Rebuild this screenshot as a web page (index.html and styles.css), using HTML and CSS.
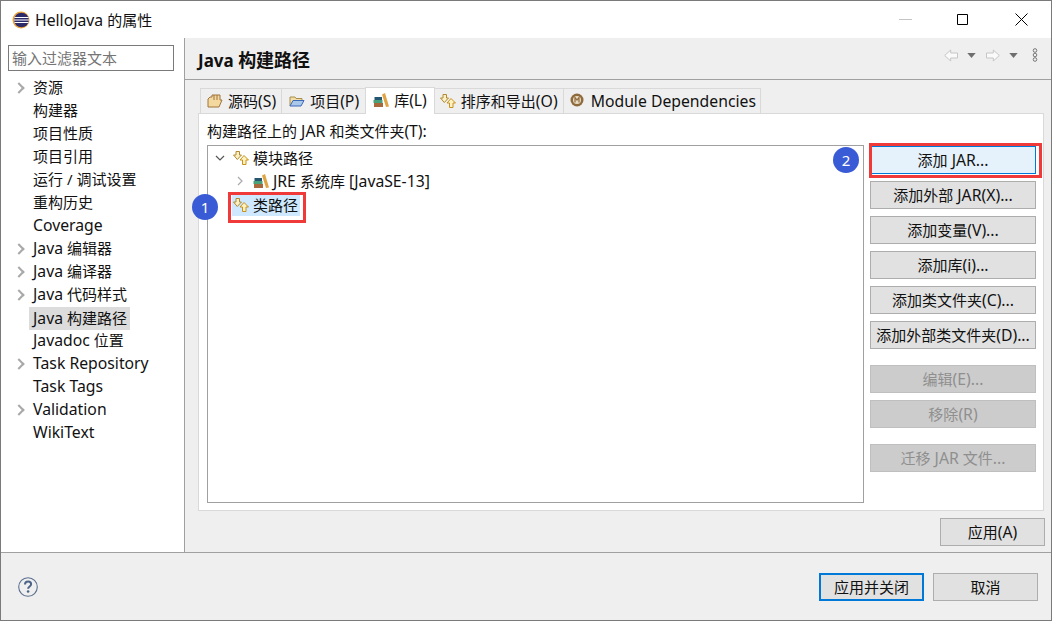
FILE: index.html
```html
<!DOCTYPE html>
<html>
	<head>
		<meta charset="utf-8">
		<title>HelloJava 的属性</title>
		<link rel="stylesheet" href="styles.css">
	</head>
	<body>
		<svg class="defs" width="0" height="0">
			<defs>
				<symbol id="ico-path" viewBox="0 0 16 16">
					<path d="M3 1.500h3.500v3.500h2l-4.200 4.500L0.500 5h2.500z" fill="#fbf0c4" stroke="#b08a30"/>
					<path d="M9.500 14.500h3.500v-4.500h2.500l-4.500-4.500-4 4.500h2.500z" fill="#fdf2c0" stroke="#c8901c"/>
				</symbol>
				<symbol id="ico-lib" viewBox="0 0 16 16">
					<path d="M1 11h9v4H1z" fill="#a9673c"/>
					<path d="M0.500 8h9v3h-9z" fill="#4aa078"/>
					<path d="M1.500 5h7.500v3H1.500z" fill="#25566f"/>
					<path d="M9 2.500l3-1.500 4 13.500-3 .5z" fill="#e0a444"/>
				</symbol>
				<symbol id="ico-tri" viewBox="0 0 10 6">
					<path d="M0 0h10L5 6z" fill="#6e6e6e"/>
				</symbol>
			</defs>
		</svg>

		<div class="window">
			<div class="titlebar">
				<svg class="app-icon" viewBox="0 0 18 18">
					<circle cx="9" cy="9" r="8.500" fill="#e8a33c"/>
					<circle cx="9.500" cy="9" r="7.300" fill="#2c2a6b"/>
					<path d="M2.500 6.500h14M2 9h15M2.500 11.500h14" stroke="#fff" stroke-width="1.200"/>
				</svg>
				<span class="title"><span class="la">HelloJava </span>的属性</span>
				<div class="win-btns">
					<span class="win-btn"><svg width="13" height="13" viewBox="0 0 13 13"><path d="M0 6.500h13" stroke="#c4c4c4"/></svg></span>
					<span class="win-btn"><svg width="13" height="13" viewBox="0 0 13 13"><path d="M1.500 1.500h10v10h-10z" fill="none" stroke="#000"/></svg></span>
					<span class="win-btn"><svg width="13" height="13" viewBox="0 0 13 13"><path d="M.5.500l12 12M12.500.500l-12 12" stroke="#000" fill="none"/></svg></span>
				</div>
			</div>

			<div class="main">
				<div class="sidebar">
					<div class="filter">输入过滤器文本</div>
					<ul class="nav">
						<li class="has-kids">资源</li>
						<li>构建器</li>
						<li>项目性质</li>
						<li>项目引用</li>
						<li>运行 / 调试设置</li>
						<li>重构历史</li>
						<li class="la">Coverage</li>
						<li class="has-kids"><span class="la">Java </span>编辑器</li>
						<li class="has-kids"><span class="la">Java </span>编译器</li>
						<li class="has-kids"><span class="la">Java </span>代码样式</li>
						<li class="current"><span><span class="la">Java </span>构建路径</span></li>
						<li><span class="la">Javadoc </span>位置</li>
						<li class="has-kids la">Task Repository</li>
						<li class="la">Task Tags</li>
						<li class="has-kids la">Validation</li>
						<li class="la">WikiText</li>
					</ul>
				</div>

				<div class="page">
					<div class="page-head">
						<h1><span class="la">Java </span>构建路径</h1>
						<div class="page-tools">
							<svg class="nav-arrow" viewBox="0 0 14 13"><path d="M.700 6.500l6-5.500v3h6.800v5H6.700v3z" fill="#fafafa" stroke="#c6c6c6"/></svg>
							<svg class="tri"><use href="#ico-tri"/></svg>
							<svg class="nav-arrow" viewBox="0 0 14 13"><path d="M13.300 6.500l-6-5.500v3H.500v5h6.800v3z" fill="#fafafa" stroke="#c6c6c6"/></svg>
							<svg class="tri"><use href="#ico-tri"/></svg>
							<svg class="kebab" viewBox="0 0 6 14"><circle cx="3" cy="2.500" r="1.800"/><circle cx="3" cy="7" r="1.800"/><circle cx="3" cy="11.500" r="1.800"/></svg>
						</div>
					</div>

					<div class="page-body">
						<div class="tabs">
							<div class="tab">
								<svg class="ico" viewBox="0 0 16 16"><path d="M1 14V6l2-2h2V2h8v5h2l-3 7z" fill="#f3d9a0" stroke="#a0743c"/><path d="M7 2v5M10 2v5" stroke="#a0743c"/></svg>
								<span>源码<span class="la">(S)</span></span>
							</div>
							<div class="tab tab-project">
								<svg class="ico" viewBox="0 0 16 16"><path d="M1 13V4h5l1 1.500h6V8" fill="#f3dfa6" stroke="#a88c4c"/><path d="M1 13l3-5.500h11L12 13z" fill="#a9c8ea" stroke="#3c68b8"/></svg>
								<span>项目<span class="la">(P)</span></span>
							</div>
							<div class="tab active">
								<svg class="ico"><use href="#ico-lib"/></svg>
								<span>库<span class="la">(L)</span></span>
							</div>
							<div class="tab tab-order">
								<svg class="ico"><use href="#ico-path"/></svg>
								<span>排序和导出<span class="la">(O)</span></span>
							</div>
							<div class="tab tab-mod">
								<svg class="ico" viewBox="0 0 14 14"><circle cx="7" cy="7" r="6.500" fill="#8f6a3c"/><circle cx="7" cy="7" r="4" fill="#e8dcc4"/><path d="M5 9.500v-5l2 2.500 2-2.500v5" fill="none" stroke="#8f6a3c" stroke-width="1.200"/></svg>
								<span class="la">Module Dependencies</span>
							</div>
						</div>

						<div class="tab-panel">
							<div class="tree-label">构建路径上的<span class="la"> JAR </span>和类文件夹<span class="la">(T):</span></div>
							<div class="panel-cols">
								<div class="tree">
									<div class="row">
										<svg class="twist" viewBox="0 0 10 10"><path d="M1 3l4 4 4-4" fill="none" stroke="#555" stroke-width="1.200"/></svg>
										<svg class="ico"><use href="#ico-path"/></svg>
										<span class="row-text">模块路径</span>
									</div>
									<div class="row row-child">
										<svg class="twist" viewBox="0 0 10 10"><path d="M3 1l4 4-4 4" fill="none" stroke="#aaa" stroke-width="1.200"/></svg>
										<svg class="ico"><use href="#ico-lib"/></svg>
										<span class="row-text"><span class="la">JRE </span>系统库<span class="la"> [JavaSE-13]</span></span>
									</div>
									<div class="row row-selected">
										<span class="twist"></span>
										<span class="sel">
											<svg class="ico"><use href="#ico-path"/></svg>
											<span class="row-text">类路径</span>
										</span>
										<i class="mark mark-sel"></i>
										<b class="badge badge-one">1</b>
									</div>
								</div>

								<div class="actions">
									<button class="btn btn-hot">添加<span class="la"> JAR...</span><i class="mark mark-btn"></i><b class="badge badge-two">2</b></button>
									<button class="btn">添加外部<span class="la"> JAR(X)...</span></button>
									<button class="btn">添加变量<span class="la">(V)...</span></button>
									<button class="btn">添加库<span class="la">(i)...</span></button>
									<button class="btn">添加类文件夹<span class="la">(C)...</span></button>
									<button class="btn">添加外部类文件夹<span class="la">(D)...</span></button>
									<button class="btn off gap-top">编辑<span class="la">(E)...</span></button>
									<button class="btn off">移除<span class="la">(R)</span></button>
									<button class="btn off gap-top">迁移<span class="la"> JAR </span>文件<span class="la">...</span></button>
								</div>
							</div>
						</div>

						<div class="apply-row">
							<button class="btn btn-apply">应用<span class="la">(A)</span></button>
						</div>
					</div>
				</div>
			</div>

			<div class="footer">
				<svg class="help" viewBox="0 0 20 20">
					<circle cx="10" cy="10" r="9.300" fill="none" stroke="#5a7090" stroke-width="1.100"/>
					<path d="M7 7.500c0-2 1.500-3 3.100-3s3 1 3 2.700c0 2.300-3 2.300-3 4.600" fill="none" stroke="#4c6488" stroke-width="2"/>
					<circle cx="10.100" cy="14.500" r="1.300" fill="#4c6488"/>
				</svg>
				<div class="footer-btns">
					<button class="btn btn-default">应用并关闭</button>
					<button class="btn btn-cancel">取消</button>
				</div>
			</div>
		</div>
	</body>
</html>
```

FILE: styles.css
```css
html, body {padding: 0; margin: 0; height: 100%; overflow: hidden;}
body {font-family: "Noto Sans", "Noto Sans CJK SC", sans-serif; font-size: 15px; color: #111; background-color: #fff;}
.defs {position: absolute;}
.la {font-size: 15.75px;}

.window {display: flex; flex-direction: column; width: 1052px; height: 621px; box-sizing: border-box; border: 1px solid #7a7a7a; background-color: #fff;}

.titlebar {display: flex; align-items: center; height: 37px; flex: none; padding-left: 11px;}
.app-icon {width: 18px; height: 18px; margin-right: 5px;}
.win-btns {display: flex; margin-left: auto; margin-right: 1px;}
.win-btn {display: flex; align-items: center; justify-content: center; width: 58px; height: 36px;}
.win-btn svg {margin-bottom: 1px;}
.win-btn:nth-child(2) svg {margin-right: 2px;}

.main {display: flex; flex: 1; min-height: 0;}

.sidebar {width: 183px; flex: none; border-right: 1px solid #a0a0a0; background-color: #fff; padding-top: 7px;}
.filter {margin-left: 7px; width: 166px; box-sizing: border-box; height: 26px; line-height: 24px; border: 1px solid #7a7a7a; padding-left: 3px; color: #757575;}
.nav {list-style: none; margin: 5px 0 0 0; padding: 0;}
.nav li {position: relative; height: 23px; line-height: 23px; padding-left: 32px; white-space: nowrap;}
.nav li.has-kids::before {content: ""; position: absolute; left: 14px; top: 8px; width: 6px; height: 6px; border-top: 2px solid #a8a8a8; border-right: 2px solid #a8a8a8; transform: rotate(45deg);}
.nav li.current > span {display: inline-block; height: 23px; vertical-align: top; margin-top: 1px; line-height: 22px; background-color: #dcdcdc; margin-left: -4px; padding: 0 3px 0 4px;}

.page {flex: 1; display: flex; flex-direction: column; background-color: #efefef; min-width: 0;}
.page-head {display: flex; align-items: center; height: 41px; flex: none; padding-left: 13px; border-bottom: 1px solid #a0a0a0;}
.page-head h1 {margin: 3px 0 0 0; font-size: 18px; font-weight: 700; line-height: 24px;}
.page-head h1 .la {font-size: 17px;}
.page-tools {display: flex; align-items: center; margin-left: auto; margin-right: 13px; margin-bottom: 7px;}
.nav-arrow {width: 14px; height: 13px;}
.tri {width: 9px; height: 5px; margin: 0 10px 0 9px;}
.tri:nth-of-type(4) {margin-right: 14px;}
.kebab {width: 6px; height: 14px; fill: none; stroke: #777; stroke-width: 1;}

.page-body {flex: 1; display: flex; flex-direction: column; padding: 8px 7px 0 13px; min-height: 0;}

.tabs {display: flex; height: 25px; align-items: flex-end; flex: none; position: relative; z-index: 1; margin-left: 2px;}
.tab {display: flex; align-items: center; height: 25px; box-sizing: border-box; border: 1px solid #d9d9d9; border-bottom: 0; border-left: 0; background-color: #efefef; padding: 0 5px 0 6px; gap: 5px; white-space: nowrap;}
.tab:first-child {border-left: 1px solid #d9d9d9;}
.tab-project {padding: 0 6px 0 7px;}
.tab.active {height: 27px; background-color: #fff; margin-bottom: -1px; padding: 0 7px 3px 7px; border-left: 1px solid #d9d9d9; margin-left: -1px;}
.tab-order {padding-left: 5px;}
.tab-mod {padding: 0 4px 0 6px; gap: 7px;}
.tab-mod .ico {width: 14px; height: 14px; margin-bottom: 3px;}
.ico {width: 16px; height: 16px; flex: none;}

.tab-panel {flex: 1; min-height: 0; background-color: #fff; border: 1px solid #d9d9d9; padding: 7px 7px 7px 8px; display: flex; flex-direction: column;}
.tree-label {height: 24px; line-height: 20px; flex: none;}
.panel-cols {display: flex; flex: 1; min-height: 0;}

.tree {position: relative; flex: 1; border: 1px solid #a0a0a0;}
.row {display: flex; align-items: center; height: 23px; padding-left: 7px; white-space: nowrap;}
.row-text {margin-left: 4px;}
.twist {width: 10px; height: 10px; flex: none; margin-right: 8px;}
.row-child {padding-left: 27px;}
.row-selected {position: relative;}
.row-selected .twist {margin-right: 7px;}
.sel {display: flex; align-items: center; box-sizing: border-box; background-color: #cde8ff; height: 21px; margin-top: 4px; padding: 0 2px 2px 1px;}

.mark {position: absolute; border: 3px solid #f03a3a; box-sizing: border-box; pointer-events: none;}
.mark-sel {left: 20px; top: 0; width: 78px; height: 31px;}
.mark-btn {left: -2px; top: -4px; width: 173px; height: 35px;}
.badge {position: absolute; width: 26px; height: 26px; border-radius: 50%; background-color: #3a5bd6; color: #fff; font-weight: 400; font-size: 15px; line-height: 26px; text-align: center;}
.badge-one {left: -16px; top: 2px;}
.badge-two {left: -38px; top: 0;}

.actions {width: 166px; flex: none; margin-left: 6px; padding-top: 1px; display: flex; flex-direction: column; gap: 7px;}
.btn {display: block; position: relative; box-sizing: border-box; width: 166px; height: 28px; flex: none; padding: 0; border: 1px solid #adadad; background-color: #e1e1e1; color: #111; font-family: inherit; font-size: 15px; line-height: 24px; text-align: center;}
.btn-hot {background-color: #e5f1fb; border-color: #0078d7;}
.btn.off {background-color: #cccccc; border-color: #bfbfbf; color: #8f8f8f;}
.btn.gap-top {margin-top: 9px;}

.apply-row {display: flex; justify-content: flex-end; padding: 7px 0 6px; flex: none; margin-right: -1px;}
.btn-apply {width: 105px;}

.footer {display: flex; align-items: center; height: 67px; flex: none; padding-left: 17px; background-color: #efefef; border-top: 1px solid #a0a0a0;}
.help {width: 20px; height: 20px;}
.footer-btns {display: flex; margin-left: auto; margin-right: 13px; gap: 9px;}
.btn-default {width: 105px; border: 2px solid #0078d7;}
.btn-cancel {width: 105px;}
```
